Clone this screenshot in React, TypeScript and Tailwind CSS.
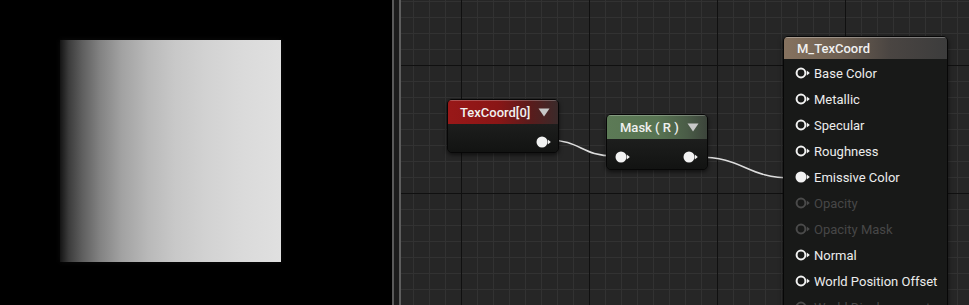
import React from "react";

type PinProps = { filled?: boolean; dim?: boolean };

function Pin({ filled, dim }: PinProps) {
  const c = dim ? "#4a4a4a" : "#f2f2f2";
  return (
    <svg width="16" height="12" viewBox="0 0 16 12" className="shrink-0">
      {filled ? (
        <circle cx="6" cy="6" r="5.5" fill={c} />
      ) : (
        <circle cx="6" cy="6" r="4.4" fill="none" stroke={c} strokeWidth="2" />
      )}
      <path d="M11.8 3.6 L14.8 6 L11.8 8.4 Z" fill={c} />
    </svg>
  );
}

function Triangle() {
  return (
    <svg width="12" height="9" viewBox="0 0 12 9" className="shrink-0">
      <path d="M0.5 0.5 L11.5 0.5 L6 8.5 Z" fill="#c8c8c8" />
    </svg>
  );
}

const rows: { label: string; filled?: boolean; dim?: boolean }[] = [
  { label: "Base Color" },
  { label: "Metallic" },
  { label: "Specular" },
  { label: "Roughness" },
  { label: "Emissive Color", filled: true },
  { label: "Opacity", dim: true },
  { label: "Opacity Mask", dim: true },
  { label: "Normal" },
  { label: "World Position Offset" },
  { label: "World Displacement", dim: true },
  { label: "Tessellation Multiplier", dim: true },
];

export default function App() {
  return (
    <div
      className="w-[969px] h-[305px] flex overflow-hidden bg-black"
      style={{ fontFamily: "Roboto, 'Noto Sans', sans-serif" }}
    >
      {/* Preview viewport */}
      <div className="w-[392px] h-full bg-black shrink-0 pt-[40px] pl-[60px]">
        <div className="w-[221px] h-[222px] bg-[linear-gradient(to_right,#141414_0%,#3c3c3c_4%,#5e5e5e_10%,#828282_18%,#a2a2a2_28%,#b9b9b9_40%,#c8c8c8_52%,#d2d2d2_66%,#dadada_82%,#e0e0e0_100%)] shadow-[0_0_6px_rgba(255,255,255,0.05)]" />
      </div>

      {/* Divider */}
      <div className="w-[2px] h-full bg-[#5a5a5a] shrink-0" />
      <div className="w-[5px] h-full bg-[#1c1c1c] shrink-0" />
      <div className="w-[2px] h-full bg-[#5e5e5e] shrink-0" />

      {/* Graph canvas */}
      <div className="relative flex-1 h-full overflow-hidden bg-[#262626] bg-[linear-gradient(to_right,#101010_1px,transparent_1px),linear-gradient(to_bottom,#101010_1px,transparent_1px),linear-gradient(to_right,#323232_1px,transparent_1px),linear-gradient(to_bottom,#323232_1px,transparent_1px)] bg-[size:128px_128px,128px_128px,16px_16px,16px_16px] bg-[position:60px_65px,60px_65px,60px_65px,60px_65px]">
        {/* Wires */}
        <svg className="absolute inset-0" width="568" height="305">
          <path
            d="M147 140 C 180 140, 180 156, 213 156"
            fill="none"
            stroke="#dcdcdc"
            strokeWidth="1.6"
          />
          <path
            d="M296 157 C 344 157, 344 178, 392 178"
            fill="none"
            stroke="#dcdcdc"
            strokeWidth="1.6"
          />
        </svg>

        {/* TexCoord node */}
        <div className="absolute left-[46px] top-[99px] w-[112px] h-[54px] rounded-[5px] border border-[#070707] bg-[#161716] shadow-[0_2px_4px_rgba(0,0,0,0.6)] overflow-hidden flex flex-col">
          <div className="h-[24px] flex items-center justify-between pl-[12px] pr-[8px] bg-[linear-gradient(to_right,#991818_0%,#8a1616_45%,#5a1c1c_75%,#3a2a2a_100%)] shadow-[inset_0_1px_0_rgba(255,255,255,0.25)]">
            <span className="text-[13px] font-medium text-[#f0f0f0] leading-none">TexCoord[0]</span>
            <Triangle />
          </div>
          <div className="flex-1 flex justify-end items-center pr-[6px] pt-[8px] bg-[linear-gradient(to_bottom,#1d1e1d,#121312)]">
            <Pin filled />
          </div>
        </div>

        {/* Mask node */}
        <div className="absolute left-[205px] top-[114px] w-[102px] h-[56px] rounded-[5px] border border-[#070707] bg-[#161716] shadow-[0_2px_4px_rgba(0,0,0,0.6)] overflow-hidden flex flex-col">
          <div className="h-[24px] flex items-center justify-between pl-[13px] pr-[8px] bg-[linear-gradient(to_right,#5c7a56_0%,#587452_50%,#4a5c47_80%,#3c443b_100%)] shadow-[inset_0_1px_0_rgba(255,255,255,0.25)]">
            <span className="text-[13px] font-medium text-[#f0f0f0] leading-none">Mask ( R )</span>
            <Triangle />
          </div>
          <div className="flex-1 flex justify-between items-center pl-[8px] pr-[8px] pt-[6px] bg-[linear-gradient(to_bottom,#1d1e1d,#121312)]">
            <Pin filled />
            <Pin filled />
          </div>
        </div>

        {/* Material output node */}
        <div className="absolute left-[382px] top-[36px] w-[165px] h-[300px] rounded-[5px] border border-[#070707] bg-[#181918] shadow-[0_2px_5px_rgba(0,0,0,0.6)] overflow-hidden flex flex-col">
          <div className="h-[22px] shrink-0 flex items-center pl-[13px] bg-[linear-gradient(to_right,#86725f_0%,#6e6052_35%,#4a4542_65%,#3c3c3c_100%)] shadow-[inset_0_1px_0_rgba(255,255,255,0.3)]">
            <span className="text-[13px] font-medium text-[#f0f0f0] leading-none">M_TexCoord</span>
          </div>
          <div className="flex flex-col pt-[1px]">
            {rows.map((r) => (
              <div key={r.label} className="h-[26px] flex items-center pl-[11px] gap-[3px]">
                <Pin filled={r.filled} dim={r.dim} />
                <span
                  className={
                    "text-[13px] leading-none whitespace-nowrap " +
                    (r.dim ? "text-[#474747]" : "text-[#ececec]")
                  }
                >
                  {r.label}
                </span>
              </div>
            ))}
          </div>
        </div>
      </div>
    </div>
  );
}
